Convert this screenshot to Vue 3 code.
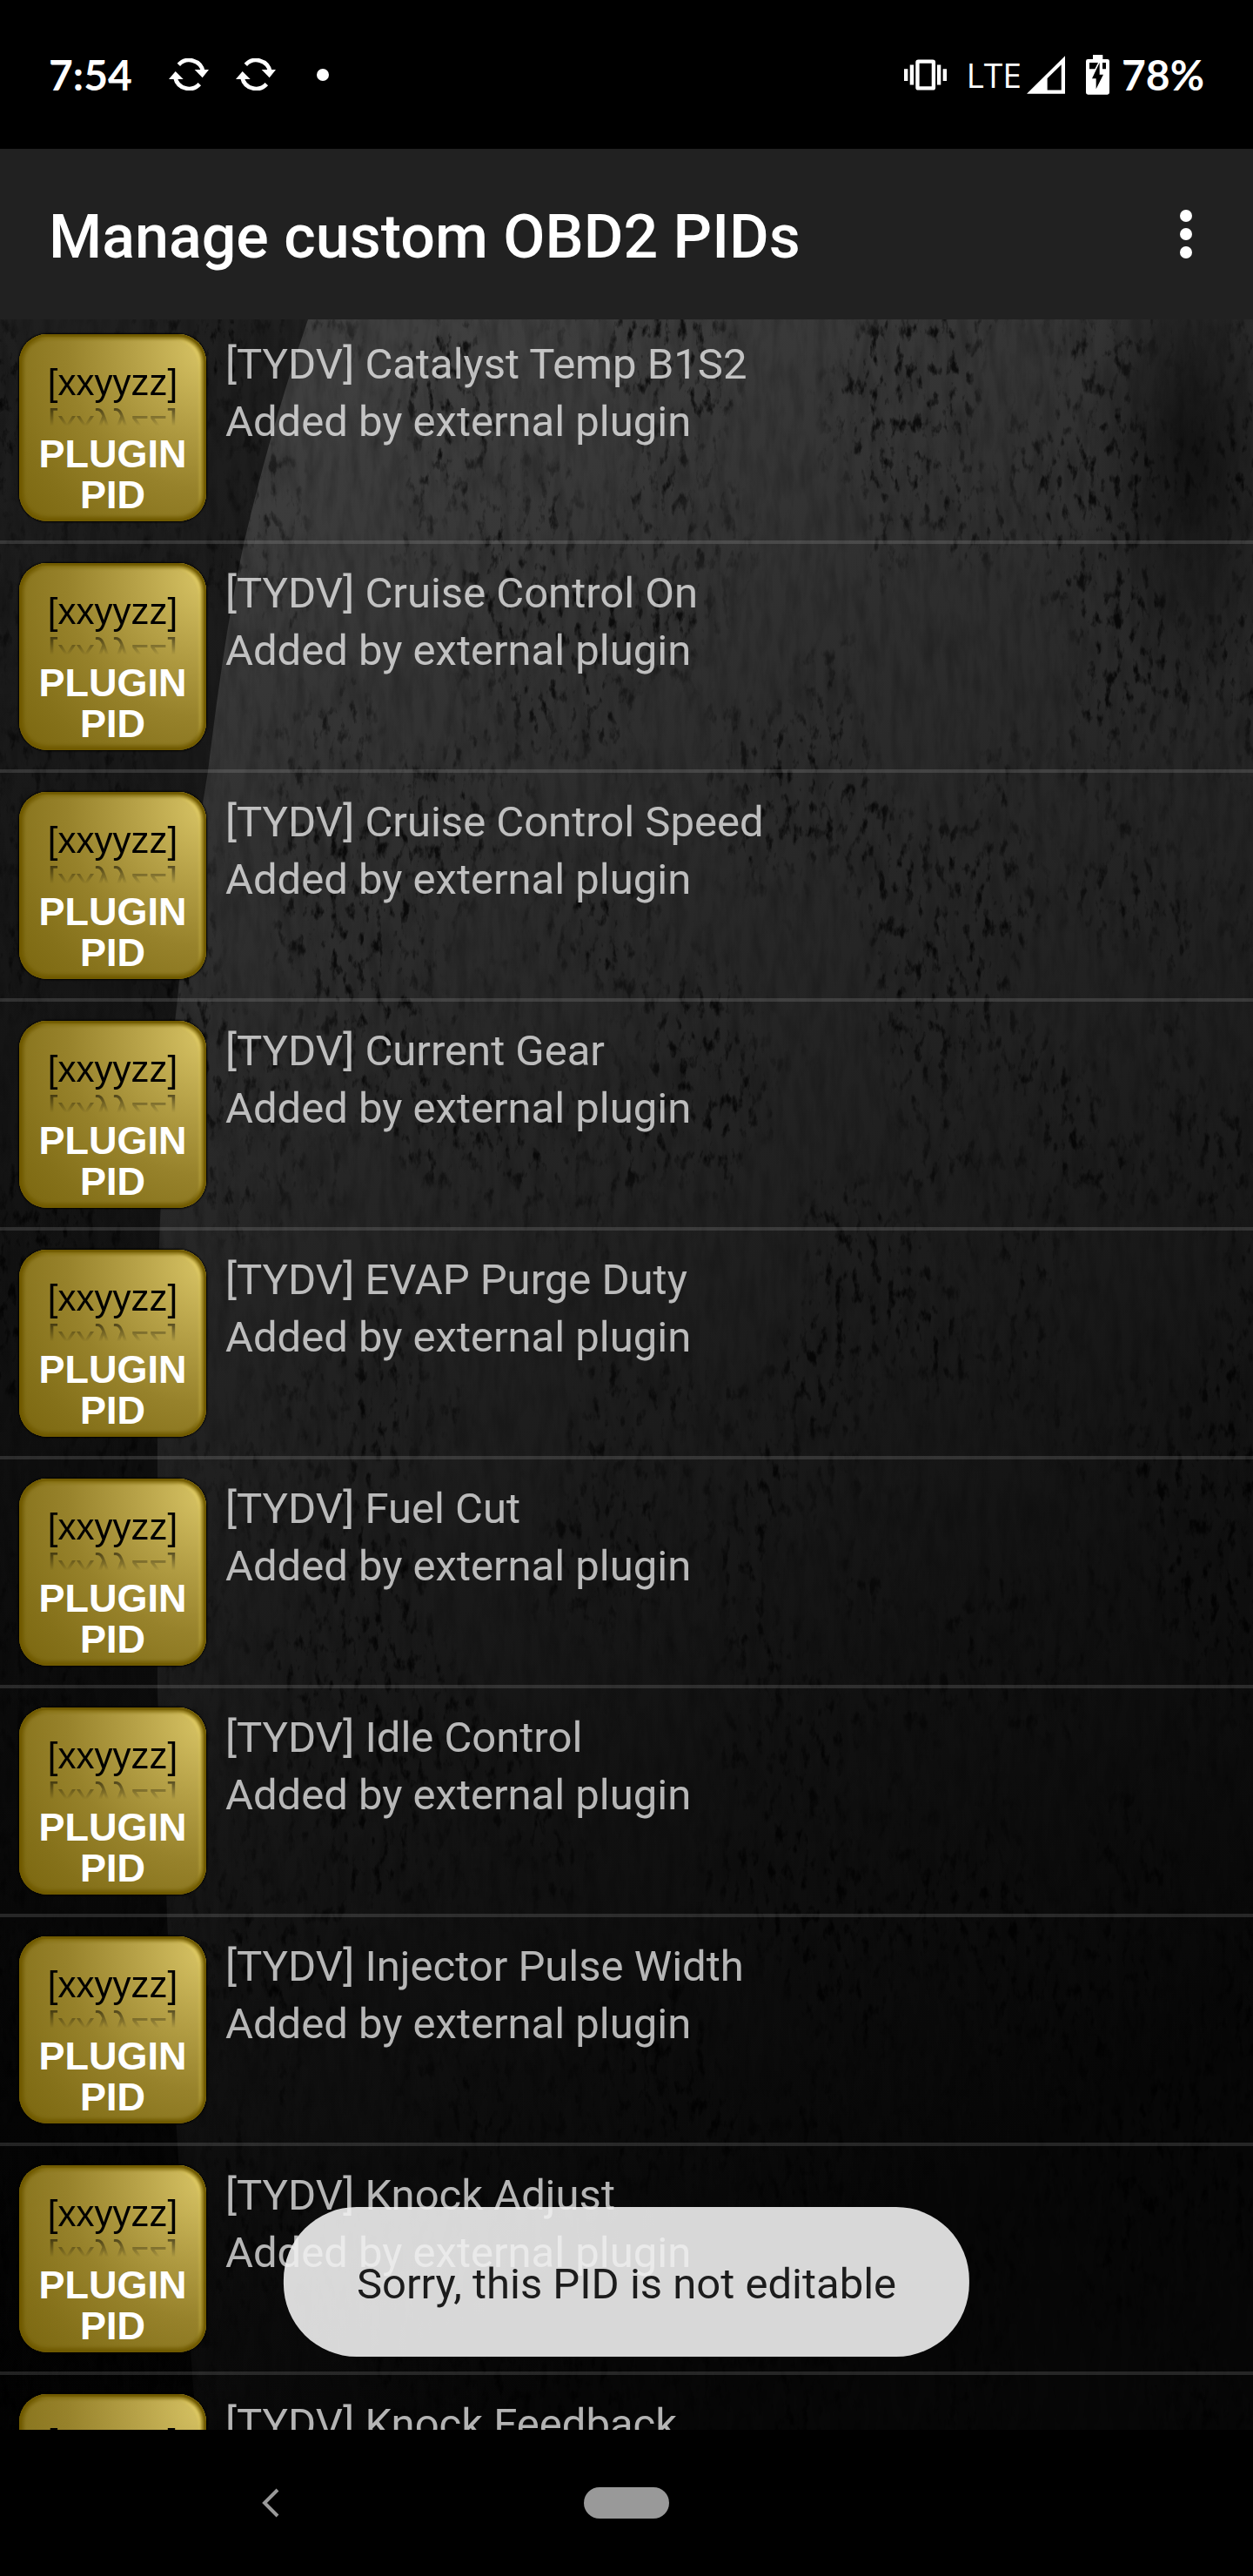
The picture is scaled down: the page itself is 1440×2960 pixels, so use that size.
<template>
  <div class="screen">
    <header class="status-bar">
      <span class="clock">7:54</span>
      <div class="notifications">
        <svg v-for="n in 2" :key="n" class="icon-sync" viewBox="582 199 138 111">
          <path d="M616 221A49 49 0 0 1 700 244" fill="none" stroke="#fff" stroke-width="14" />
          <path d="M671 238H720L698 266Z" fill="#fff" />
          <path d="M688 288A49 49 0 0 1 604 265" fill="none" stroke="#fff" stroke-width="14" />
          <path d="M582 271H632L605 244Z" fill="#fff" />
        </svg>
      </div>
      <span class="more-dot"></span>
      <div class="system">
        <svg class="icon-vibrate" viewBox="237 203 146 106">
          <rect x="283" y="210" width="55" height="92" rx="3" fill="none" stroke="#fff" stroke-width="13" />
          <path
            d="M257 222h13v68h-13zM237 236h13v41h-13zM350 222h13v68h-13zM370 236h13v41h-13z"
            fill="#fff"
          />
        </svg>
        <span class="network">LTE</span>
        <svg class="icon-signal" viewBox="655 192 134 132">
          <path
            fill-rule="evenodd"
            d="M655 324L789 192V324ZM727 270V311H776V222Z"
            fill="#fff"
          />
        </svg>
        <svg class="icon-battery" viewBox="864 186 81 138">
          <path
            d="M888 186H922V201H938Q945 201 945 208V316Q945 323 938 323H871Q864 323 864 316V208Q864 201 871 201H888Z"
            fill="#fff"
          />
          <path d="M876 213H906L895 235H876ZM921 213H933V235H921Z" fill="#000" />
          <path d="M911 213V254H924L899 304V268H885Z" fill="#000" />
        </svg>
        <span class="percent">78%</span>
      </div>
    </header>

    <div class="app-bar">
      <h1>Manage custom OBD2 PIDs</h1>
      <button class="menu-btn" aria-label="More options">
        <svg viewBox="0 0 14 56">
          <circle cx="7" cy="7" r="7" />
          <circle cx="7" cy="28" r="7" />
          <circle cx="7" cy="49" r="7" />
        </svg>
      </button>
    </div>

    <main class="content">
      <svg class="backdrop" viewBox="0 0 1440 2425" preserveAspectRatio="none">
        <defs>
          <linearGradient id="wall" x1="0" y1="0" x2="0" y2="1">
            <stop offset="0" stop-color="#1f1f1f" />
            <stop offset="0.45" stop-color="#121212" />
            <stop offset="0.85" stop-color="#050505" />
            <stop offset="1" stop-color="#030303" />
          </linearGradient>
          <linearGradient
            id="stone"
            gradientUnits="userSpaceOnUse"
            x1="350"
            y1="100"
            x2="1350"
            y2="2000"
          >
            <stop offset="0" stop-color="#3f3f3f" />
            <stop offset="0.25" stop-color="#2d2d2d" />
            <stop offset="0.5" stop-color="#1f1f1f" />
            <stop offset="0.75" stop-color="#111" />
            <stop offset="1" stop-color="#070707" />
          </linearGradient>
          <radialGradient id="shade">
            <stop offset="0" stop-color="#000" stop-opacity="0.6" />
            <stop offset="1" stop-color="#000" stop-opacity="0" />
          </radialGradient>
          <filter id="pits" x="0" y="0" width="1" height="1" color-interpolation-filters="sRGB">
            <feTurbulence type="fractalNoise" baseFrequency="0.1 0.045" numOctaves="4" seed="8" />
            <feColorMatrix
              values="0 0 0 0 0  0 0 0 0 0  0 0 0 0 0  4.5 0 0 0 -2.5"
              result="fine"
            />
            <feTurbulence type="fractalNoise" baseFrequency="0.006 0.004" numOctaves="4" seed="21" />
            <feColorMatrix
              values="0 0 0 0 0  0 0 0 0 0  0 0 0 0 0  4 0 0 0 -1.6"
              result="patches"
            />
            <feComposite in="fine" in2="patches" operator="in" />
          </filter>
          <filter id="grain" x="0" y="0" width="1" height="1" color-interpolation-filters="sRGB">
            <feTurbulence type="fractalNoise" baseFrequency="0.08 0.02" numOctaves="4" seed="3" />
            <feColorMatrix values="0 0 0 0 0  0 0 0 0 0  0 0 0 0 0  2 0 0 0 -0.8" />
          </filter>
        </defs>
        <rect width="1440" height="2425" fill="url(#wall)" />
        <path
          d="M354 0C325 85 302 165 281 254C262 340 250 430 239 519C224 610 212 700 204 781C190 900 183 1010 181 1150V1571C184 1680 190 1760 192 1833C195 1920 198 2010 204 2097C210 2190 215 2280 221 2360L226 2425H1440V0Z"
          fill="url(#stone)"
        />
        <ellipse cx="1370" cy="150" rx="120" ry="300" fill="url(#shade)" />
        <rect width="1440" height="2425" filter="url(#grain)" opacity="0.2" />
        <rect width="1440" height="2425" filter="url(#pits)" opacity="0.75" />
      </svg>

      <ul class="pid-list">
        <li v-for="pid in pids" :key="pid">
          <button class="pid-row" @click="showToast">
            <span class="badge">
              <span class="badge-code">[xxyyzz]</span>
              <span class="badge-label">PLUGIN<br />PID</span>
            </span>
            <span class="pid-text">
              <span>[TYDV] {{ pid }}</span>
              <span>Added by external plugin</span>
            </span>
          </button>
        </li>
      </ul>

      <div v-if="toast" class="toast" role="status">{{ toast }}</div>
    </main>

    <nav class="nav-bar">
      <button class="back-btn" aria-label="Back">
        <svg viewBox="0 0 20 34">
          <path d="M18 2L3 17L18 32" fill="none" stroke="#999" stroke-width="4" />
        </svg>
      </button>
      <button class="home-btn" aria-label="Home"></button>
      <span class="nav-spacer"></span>
    </nav>
  </div>
</template>

<script setup>
import { ref } from 'vue';

const pids = [
  'Catalyst Temp B1S2',
  'Cruise Control On',
  'Cruise Control Speed',
  'Current Gear',
  'EVAP Purge Duty',
  'Fuel Cut',
  'Idle Control',
  'Injector Pulse Width',
  'Knock Adjust',
  'Knock Feedback',
];

const message = 'Sorry, this PID is not editable';
const toast = ref(message);

const showToast = () => {
  toast.value = message;
};
</script>

<style>
body {
  margin: 0;
  background: #000;
}
</style>

<style scoped>
.screen {
  display: flex;
  flex-direction: column;
  height: 100vh;
  overflow: hidden;
  background: #000;
  color: #fff;
  font-family: Roboto, sans-serif;
}

button {
  margin: 0;
  padding: 0;
  border: none;
  background: none;
  color: inherit;
  font: inherit;
  text-align: left;
  cursor: pointer;
}

svg {
  display: block;
}

.status-bar {
  flex: none;
  display: flex;
  align-items: center;
  height: 171px;
  padding: 0 56px;
}

.clock,
.percent {
  font-family: Lato, sans-serif;
  font-size: 48px;
  font-weight: 700;
}

.notifications {
  display: flex;
  gap: 31px;
  margin-left: 42px;
}

.icon-sync {
  width: 46px;
  height: 37px;
}

.more-dot {
  width: 14px;
  height: 14px;
  margin-left: 47px;
  border-radius: 50%;
  background: #fff;
}

.system {
  display: flex;
  align-items: center;
  margin-left: auto;
}

.icon-vibrate {
  width: 49px;
  height: 36px;
}

.network {
  margin: 0 6px 0 22px;
  font-family: 'Open Sans', sans-serif;
  font-size: 39px;
}

.icon-signal {
  width: 44px;
  height: 44px;
}

.icon-battery {
  width: 27px;
  height: 46px;
  margin: 0 14px 0 24px;
}

.app-bar {
  flex: none;
  display: flex;
  align-items: center;
  justify-content: space-between;
  height: 196px;
  padding: 0 56px;
  background: #212121;
}

.app-bar h1 {
  margin: 0;
  padding-top: 6px;
  font-size: 70px;
  font-weight: 500;
}

.menu-btn {
  padding: 14px;
}

.menu-btn svg {
  width: 14px;
  height: 56px;
  fill: #fff;
}

.content {
  position: relative;
  flex: 1 1 0;
  min-height: 0;
  overflow: hidden;
}

.backdrop {
  position: absolute;
  inset: 0;
  width: 100%;
  height: 100%;
}

.pid-list {
  position: relative;
  margin: 0;
  padding: 0;
  list-style: none;
}

.pid-list li {
  border-bottom: 4px solid rgba(255, 255, 255, 0.13);
}

.pid-row {
  display: flex;
  gap: 22px;
  width: 100%;
  padding: 22px;
}

.pid-list li:first-child .pid-row {
  padding-top: 17px;
}

.badge {
  flex: none;
  display: flex;
  flex-direction: column;
  align-items: center;
  box-sizing: border-box;
  width: 215px;
  height: 215px;
  padding-top: 30px;
  border-radius: 32px;
  background: radial-gradient(
    circle at 100% 8%,
    #d8c465 0%,
    #b6a147 28%,
    #97822b 55%,
    #85711a 80%,
    #7b670f 100%
  );
  box-shadow:
    0 0 2px 1px #000,
    inset 0 0 2px 3px #705a00,
    inset 0 0 3px 6px rgba(112, 90, 0, 0.6),
    inset -8px 5px 3px rgba(255, 232, 110, 0.35);
  font-family: 'Liberation Sans', Arial, sans-serif;
}

.badge-code {
  color: #000;
  font-size: 42px;
  line-height: 52px;
  -webkit-box-reflect: below 0 linear-gradient(transparent 55%, rgba(0, 0, 0, 0.6));
}

.badge-label {
  margin-top: 32px;
  color: #fff;
  font-size: 45px;
  font-weight: 700;
  line-height: 47px;
  text-align: center;
}

.pid-text {
  display: flex;
  flex-direction: column;
  padding-top: 2px;
  color: rgba(255, 255, 255, 0.7);
  font-size: 49px;
  line-height: 66px;
}

.toast {
  position: absolute;
  bottom: 84px;
  left: 50%;
  padding: 56px 84px 50px;
  border-radius: 84px;
  background: rgba(239, 239, 239, 0.9);
  color: #1c1c1c;
  font-size: 49px;
  line-height: 66px;
  white-space: nowrap;
  transform: translateX(-50%);
}

.nav-bar {
  flex: none;
  display: flex;
  align-items: center;
  justify-content: center;
  gap: 290px;
  height: 168px;
}

.back-btn,
.nav-spacer {
  width: 140px;
}

.back-btn svg {
  width: 20px;
  height: 34px;
  margin: 0 auto;
}

.home-btn {
  width: 98px;
  height: 36px;
  border-radius: 18px;
  background: #999;
}
</style>
